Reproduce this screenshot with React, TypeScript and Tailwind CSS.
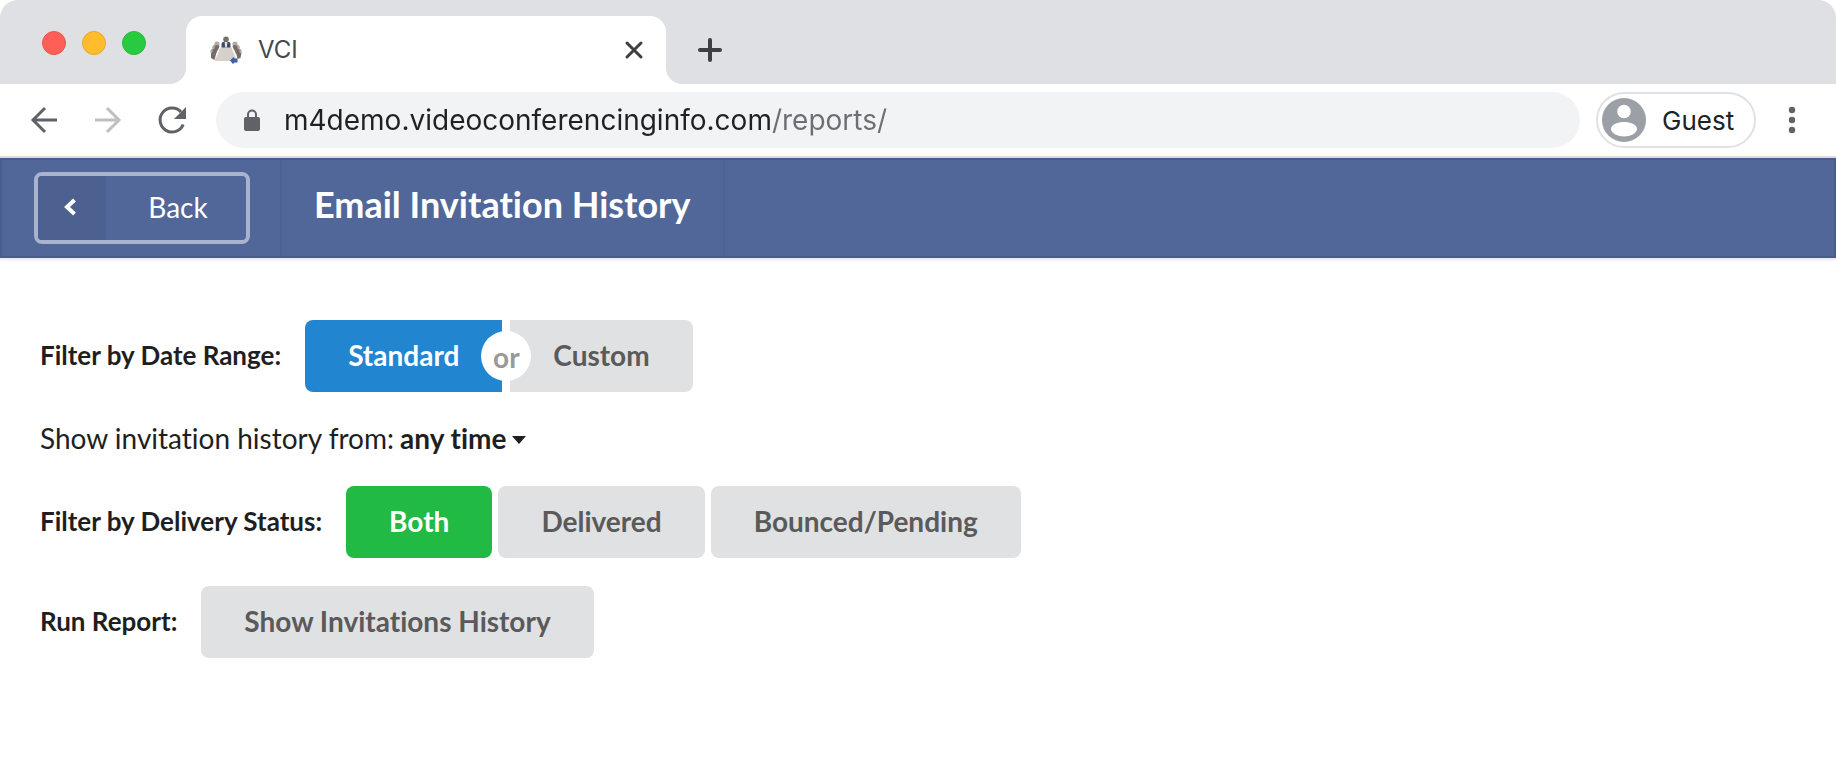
import { useState } from "react";

const CHROME_FONT = "font-[Inter,'Liberation_Sans',sans-serif]";
const PAGE_FONT = "font-[Lato,'Liberation_Sans',sans-serif] [font-variant-ligatures:none]";

const BUTTON = "h-[72px] px-[43px] pb-0.5 text-[28px] leading-7 font-bold cursor-pointer";
const LABEL = "pb-0.5 text-[26px] font-bold";
const GRAY = "bg-[#e0e1e3] text-[#5a5a5a]";

function Favicon() {
  return (
    <svg width="32" height="28" viewBox="0 0 32 28" aria-hidden="true">
      <circle cx="16" cy="3.2" r="2.8" fill="#77706a" />
      <path d="M11.5 13V8.5Q11.5 5.8 14 5.8h4q2.500 0 2.500 2.700V13z" fill="#3f4a66" />
      <path d="M14.6 6h2.8l-.6 5.5h-1.6z" fill="#dfe3ee" />
      <g fill="#b3aaa4">
        <circle cx="7" cy="8" r="2.6" />
        <circle cx="5" cy="11.5" r="2.8" />
        <circle cx="3.4" cy="15.5" r="3" />
        <circle cx="25" cy="8" r="2.6" />
        <circle cx="27" cy="11.5" r="2.8" />
        <circle cx="28.6" cy="15.5" r="3" />
      </g>
      <g fill="#756c69">
        <path d="M5 9.5q4-1.500 4.500 1L8 14H4zM3 13q4.500-1 4.500 1.500L6 18H2z" />
        <path d="M1 17q5-1 5 1.500L4.500 24 1 22z" />
        <path d="M27 9.500q-4-1.500-4.500 1L24 14h4zM29 13q-4.500-1-4.500 1.500L26 18h4z" />
        <path d="M31.500 17q-5-1-5 1.500l1 4.500 3-1z" />
      </g>
      <path d="M10.500 11.500h11L27 25H4.500z" fill="#d5d1ca" />
      <path d="M20 24.500l3.500-3.500 1 1.500h3v4h-3L23 28z" fill="#3d5fa5" />
    </svg>
  );
}

function TabStrip() {
  return (
    <div className="flex h-[84px] bg-white">
      <div className="flex w-[186px] shrink-0 items-center gap-4 rounded-tl-[18px] rounded-br-2xl bg-[#dfe0e3] pt-0.5 pl-[42px]">
        <button aria-label="Close window" className="size-6 rounded-full border border-[#e8544b] bg-[#ff5f57]" />
        <button aria-label="Minimize window" className="size-6 rounded-full border border-[#e5a82c] bg-[#ffbd2e]" />
        <button aria-label="Zoom window" className="size-6 rounded-full border border-[#27b93c] bg-[#28ca42]" />
      </div>
      <div className="w-[480px] shrink-0 bg-[#dfe0e3] pt-4">
        <div className="flex h-full items-center rounded-t-2xl bg-white pr-[22px] pl-6">
          <Favicon />
          <span className="ml-4 flex-1 text-2xl text-[#45494d]">VCI</span>
          <button aria-label="Close tab" className="cursor-pointer">
            <svg width="20" height="20" viewBox="0 0 20 20" fill="none" stroke="#3c4043" strokeWidth="3" strokeLinecap="round">
              <path d="M3 3l14 14M17 3L3 17" />
            </svg>
          </button>
        </div>
      </div>
      <div className="flex flex-1 items-center rounded-tr-[18px] rounded-bl-2xl bg-[#dfe0e3] pt-4 pl-8">
        <button aria-label="New tab" className="cursor-pointer">
          <svg width="24" height="24" viewBox="0 0 24 24" fill="none" stroke="#3c4043" strokeWidth="4" strokeLinecap="round">
            <path d="M12 2v20M2 12h20" />
          </svg>
        </button>
      </div>
    </div>
  );
}

function Toolbar() {
  const [url, setUrl] = useState("m4demo.videoconferencinginfo.com/reports/");
  return (
    <div className="flex h-[74px] items-center border-b-2 border-[#d8dce1] bg-white pr-10 pl-7">
      <button aria-label="Go back" className="cursor-pointer">
        <svg width="32" height="32" viewBox="0 0 32 32" fill="none" stroke="#5f6368" strokeWidth="3">
          <path d="M29 16H5M17 4L5 16l12 12" />
        </svg>
      </button>
      <button aria-label="Go forward" className="ml-8 cursor-pointer">
        <svg width="32" height="32" viewBox="0 0 32 32" fill="none" stroke="#bdbfc1" strokeWidth="3">
          <path d="M3 16h24M15 4l12 12-12 12" />
        </svg>
      </button>
      <button aria-label="Reload" className="ml-8 cursor-pointer">
        <svg width="32" height="32" viewBox="0 0 32 32" fill="none">
          <path d="M27.200 20.500A12 12 0 1 1 25 8" stroke="#5f6368" strokeWidth="3" />
          <path d="M30 3v12H18z" fill="#5f6368" />
        </svg>
      </button>
      <div className="ml-7 flex h-14 flex-1 items-center rounded-full bg-[#f1f3f4] pl-7">
        <svg width="16" height="22" viewBox="0 0 16 22" aria-hidden="true">
          <path d="M4 9V5.500a4 4 0 0 1 8 0V9" fill="none" stroke="#5f6368" strokeWidth="2" />
          <rect y="8" width="16" height="14" rx="2" fill="#5f6368" />
        </svg>
        <input
          aria-label="Address"
          value={url}
          onChange={(e) => setUrl(e.target.value)}
          className="ml-6 min-w-0 flex-1 bg-[linear-gradient(90deg,#202124_488px,#6b6f74_488px)] bg-clip-text text-[28px] text-transparent outline-none"
        />
      </div>
      <button className="ml-4 flex h-14 w-40 cursor-pointer items-center gap-4 rounded-full border-2 border-[#dfe1e4] pl-1 text-[26px] text-[#202124]">
        <svg width="44" height="44" viewBox="0 0 44 44" aria-hidden="true">
          <circle cx="22" cy="22" r="22" fill="#9aa0a6" />
          <circle cx="22" cy="13.500" r="6.800" fill="#fff" />
          <path d="M9 31c0-4.500 7-7 13-7s13 2.500 13 7-7 7.500-13 7.500S9 35.500 9 31z" fill="#fff" />
        </svg>
        Guest
      </button>
      <button aria-label="Browser menu" className="ml-8 cursor-pointer">
        <svg width="8" height="28" viewBox="0 0 8 28" fill="#5f6368">
          <circle cx="4" cy="4" r="3.200" />
          <circle cx="4" cy="14" r="3.200" />
          <circle cx="4" cy="24" r="3.200" />
        </svg>
      </button>
    </div>
  );
}

function NavBar() {
  return (
    <header className="flex h-[100px] border-2 border-[#495c8d] bg-[#516799] text-white shadow-[0_2px_2px_#e9e9ee]">
      <div className="flex items-center border-r-2 border-[#4d6294] pr-[30px] pl-8">
        <button className="flex h-[72px] w-[216px] cursor-pointer overflow-hidden rounded-lg border-4 border-[#a8b3cd] text-[28px]">
          <span className="flex h-full w-[68px] items-center justify-center bg-[#4c618f] pr-1 pb-0.5">
            <svg width="14" height="18" viewBox="0 0 14 18" fill="none" stroke="#fff" strokeWidth="4">
              <path d="M11.500 2L4 9l7.500 7" />
            </svg>
          </span>
          <span className="flex h-full flex-1 items-center justify-center pb-0.5 pl-1">Back</span>
        </button>
      </div>
      <div className="flex items-center border-r-2 border-[#4d6294] px-8">
        <h1 className="pb-2 text-[36px] leading-10 font-bold">Email Invitation History</h1>
      </div>
    </header>
  );
}

function Filters() {
  const [range, setRange] = useState("Standard");
  const [period, setPeriod] = useState("any time");
  const [status, setStatus] = useState("Both");
  return (
    <main className="px-10 pt-[62px] pb-10 text-[#1f1f1f]">
      <div role="group" aria-labelledby="range-label" className="flex items-center gap-6">
        <span id="range-label" className={LABEL}>Filter by Date Range:</span>
        <div className="flex">
          <button
            onClick={() => setRange("Standard")}
            className={`${BUTTON} rounded-l-lg ${range === "Standard" ? "bg-[#2185d0] text-white" : GRAY}`}
          >
            Standard
          </button>
          <span className="relative z-10 flex w-2 items-center justify-center">
            <span className="absolute flex size-[50px] items-center justify-center rounded-full bg-white pt-0.5 text-[28px] leading-7 font-bold text-[#999999]">
              or
            </span>
          </span>
          <button
            onClick={() => setRange("Custom")}
            className={`${BUTTON} rounded-r-lg ${range === "Custom" ? "bg-[#2185d0] text-white" : GRAY}`}
          >
            Custom
          </button>
        </div>
      </div>

      <div className="mt-[26px] flex h-10 items-center text-[28px]">
        <label htmlFor="period">Show invitation history from:</label>
        <select
          id="period"
          value={period}
          onChange={(e) => setPeriod(e.target.value)}
          className="ml-1.5 field-sizing-content cursor-pointer appearance-none bg-transparent font-bold outline-none"
        >
          <option>any time</option>
          <option>today</option>
          <option>this week</option>
          <option>this month</option>
        </select>
        <svg width="14" height="8" viewBox="0 0 14 8" className="mt-1 ml-1.5" aria-hidden="true">
          <path d="M0 0h14L7 8z" fill="#1f1f1f" />
        </svg>
      </div>

      <div role="group" aria-labelledby="status-label" className="mt-7 flex items-center gap-6">
        <span id="status-label" className={LABEL}>Filter by Delivery Status:</span>
        <div className="flex gap-1.5">
          {["Both", "Delivered", "Bounced/Pending"].map((name) => (
            <button
              key={name}
              onClick={() => setStatus(name)}
              className={`${BUTTON} rounded-lg ${status === name ? "bg-[#21ba45] text-white" : GRAY}`}
            >
              {name}
            </button>
          ))}
        </div>
      </div>

      <div role="group" aria-labelledby="run-label" className="mt-7 flex items-center gap-6">
        <span id="run-label" className={LABEL}>Run Report:</span>
        <button className={`${BUTTON} rounded-lg ${GRAY}`}>Show Invitations History</button>
      </div>
    </main>
  );
}

export default function App() {
  return (
    <div className="min-h-screen bg-white">
      <div className={CHROME_FONT}>
        <TabStrip />
        <Toolbar />
      </div>
      <div className={PAGE_FONT}>
        <NavBar />
        <Filters />
      </div>
    </div>
  );
}
